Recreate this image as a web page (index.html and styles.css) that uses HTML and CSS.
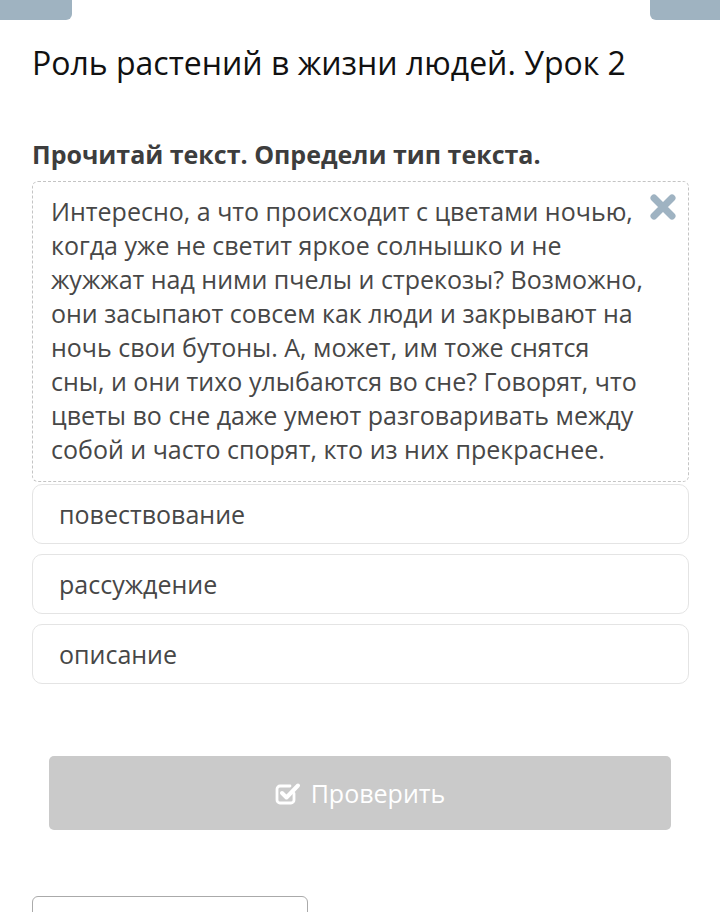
FILE: index.html
```html
<!DOCTYPE html>
<html lang="ru">
<head>
    <meta charset="UTF-8">
    <meta name="viewport" content="width=device-width, initial-scale=1.0">
    <title>Роль растений в жизни людей. Урок 2</title>
    <link rel="stylesheet" href="styles.css">
</head>
<body>
    <div class="topbar">
        <span class="tab tab-left"></span>
        <span class="tab tab-right"></span>
    </div>

    <div class="container">
        <h1 class="title">Роль растений в жизни людей. Урок 2</h1>

        <h2 class="task">Прочитай текст. Определи тип текста.</h2>

        <div class="passage">
            <p>Интересно, а что происходит с цветами ночью, когда уже не светит яркое солнышко и не жужжат над ними пчелы и стрекозы? Возможно, они засыпают совсем как люди и закрывают на ночь свои бутоны. А, может, им тоже снятся сны, и они тихо улыбаются во сне? Говорят, что цветы во сне даже умеют разговаривать между собой и часто спорят, кто из них прекраснее.</p>
            <span class="close">
                <svg width="28" height="28" viewBox="0 0 28 28">
                    <path d="M5 5 L23 23 M23 5 L5 23" stroke="#9fb3c2" stroke-width="7" stroke-linecap="round"/>
                </svg>
            </span>
        </div>

        <div class="options">
            <div class="option">повествование</div>
            <div class="option">рассуждение</div>
            <div class="option">описание</div>
        </div>

        <button class="check" disabled>
            <svg width="27" height="27" viewBox="0 0 27 27">
                <path d="M19 13.5 V20 a3 3 0 0 1 -3 3 H5 a3 3 0 0 1 -3 -3 V9 a3 3 0 0 1 3 -3 H15" fill="none" stroke="#fff" stroke-width="2.8" stroke-linecap="round"/>
                <path d="M7 13 L11.5 17.5 L23 5.5" fill="none" stroke="#fff" stroke-width="4" stroke-linecap="round" stroke-linejoin="round"/>
            </svg>
            Проверить
        </button>

        <div class="next"></div>
    </div>
</body>
</html>
```

FILE: styles.css
```css
body {
    font-family: 'Open Sans', 'Noto Sans', sans-serif;
    margin: 0;
    background: #ffffff;
    color: #444;
}
.topbar {
    display: flex;
    justify-content: space-between;
    height: 20px;
}
.tab {
    width: 72px;
    height: 20px;
    background: #9fb3c1;
}
.tab-left {
    border-radius: 0 0 6px 0;
}
.tab-right {
    width: 70px;
    border-radius: 0 0 0 6px;
}
.container {
    padding: 0 31px 0 32px;
}
.title {
    font-size: 32px;
    font-weight: 400;
    line-height: 40px;
    color: #111;
    margin: 23px 0 0;
}
.task {
    font-size: 25px;
    font-weight: 700;
    line-height: 32px;
    color: #3d3d3d;
    margin: 55px 0 11px;
}
.passage {
    position: relative;
    border: 1px dashed #c4c4c4;
    border-radius: 6px;
    padding: 12px 42px 15px 18px;
}
.passage p {
    margin: 0;
    font-size: 25px;
    line-height: 34px;
    color: #474747;
}
.close {
    position: absolute;
    top: 11px;
    right: 11px;
}
.options {
    display: flex;
    flex-direction: column;
    gap: 10px;
    margin-top: 2px;
}
.option {
    height: 58px;
    display: flex;
    align-items: center;
    padding-left: 26px;
    border: 1px solid #e4e4e4;
    border-radius: 10px;
    font-size: 25px;
    color: #474747;
}
.check {
    display: flex;
    align-items: center;
    justify-content: center;
    gap: 9px;
    width: 622px;
    height: 74px;
    margin: 72px 0 0 17px;
    background: #cacaca;
    border: none;
    border-radius: 5px;
    color: #fff;
    font-family: 'Open Sans', 'Noto Sans', sans-serif;
    font-size: 25px;
    padding: 0;
}
.next {
    width: 274px;
    height: 40px;
    margin-top: 66px;
    border: 1px solid #aaa;
    border-radius: 6px 6px 0 0;
}
```
